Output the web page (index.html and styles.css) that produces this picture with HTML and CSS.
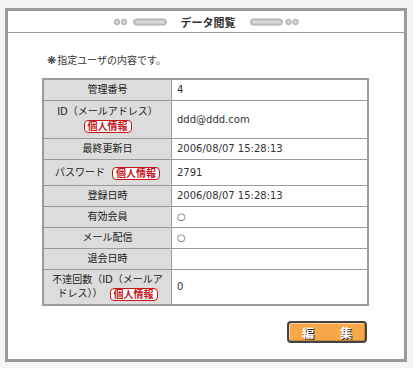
FILE: index.html
```html
<!DOCTYPE html>
<html>
	<head>
		<meta charset="UTF-8">
		<title>データ閲覧</title>
		<link rel="stylesheet" href="styles.css">
	</head>

	<body>
		<div class="panel">
			<div class="panel-head">
				<svg class="deco" width="54" height="8" viewBox="0 0 54 8">
					<circle cx="3" cy="4" r="2.8" fill="#c4c4c4" stroke="#a8a8a8" stroke-width="0.8"/>
					<circle cx="3" cy="4" r="1.2" fill="#dedede"/>
					<circle cx="10" cy="4" r="2.8" fill="#c4c4c4" stroke="#a8a8a8" stroke-width="0.8"/>
					<circle cx="10" cy="4" r="1.2" fill="#dedede"/>
					<rect x="19.5" y="1" width="33" height="6" rx="3" fill="#c8c8c8" stroke="#a4a4a4" stroke-width="0.9"/>
					<line x1="22" y1="4" x2="50" y2="4" stroke="#f0f0f0" stroke-width="1"/>
				</svg>
				<span class="head-title">データ閲覧</span>
				<svg class="deco" width="49" height="8" viewBox="0 0 49 8">
					<rect x="0.5" y="1" width="32" height="6" rx="3" fill="#c8c8c8" stroke="#a4a4a4" stroke-width="0.9"/>
					<line x1="3" y1="4" x2="30" y2="4" stroke="#f0f0f0" stroke-width="1"/>
					<circle cx="38.5" cy="4" r="2.8" fill="#c4c4c4" stroke="#a8a8a8" stroke-width="0.8"/>
					<circle cx="38.5" cy="4" r="1.2" fill="#dedede"/>
					<circle cx="45.5" cy="4" r="2.8" fill="#c4c4c4" stroke="#a8a8a8" stroke-width="0.8"/>
					<circle cx="45.5" cy="4" r="1.2" fill="#dedede"/>
				</svg>
			</div>

			<p class="message"><span class="mark">❋</span>指定ユーザの内容です。</p>

			<table class="detail">
				<tr>
					<th>管理番号</th>
					<td>4</td>
				</tr>
				<tr class="tall">
					<th>ID（メールアドレス）<br><span class="badge">個人情報</span></th>
					<td>ddd@ddd.com</td>
				</tr>
				<tr>
					<th>最終更新日</th>
					<td>2006/08/07 15:28:13</td>
				</tr>
				<tr class="mid">
					<th>パスワード<span class="badge gap">個人情報</span></th>
					<td>2791</td>
				</tr>
				<tr>
					<th>登録日時</th>
					<td>2006/08/07 15:28:13</td>
				</tr>
				<tr>
					<th>有効会員</th>
					<td><span class="flag">○</span></td>
				</tr>
				<tr>
					<th>メール配信</th>
					<td><span class="flag">○</span></td>
				</tr>
				<tr>
					<th>退会日時</th>
					<td></td>
				</tr>
				<tr class="wrap">
					<th>
						<span class="line">不達回数（ID（メールア</span>
						<span class="line">ドレス））<span class="badge gap">個人情報</span></span>
					</th>
					<td>0</td>
				</tr>
			</table>

			<div class="actions">
				<button class="edit-btn" type="button"><span>編</span><span>集</span></button>
			</div>
		</div>
	</body>
</html>
```

FILE: styles.css
```css
html, body, p, table, th, td {
	margin: 0;
	padding: 0;
}
body {
	background: #f7f4f7;
	font-family: "DejaVu Sans", "Noto Sans CJK JP", sans-serif;
	font-size: 10px;
	color: #333;
}
.panel {
	margin: 8px 0 0 5px;
	width: 396px;
	height: 348px;
	border: 3px solid #9a9a9a;
	background: #fff;
}
.panel-head {
	height: 21px;
	border-bottom: 1px solid #9a9a9a;
	display: flex;
	align-items: center;
	justify-content: center;
}
.deco {
	display: block;
}
.head-title {
	margin: 0 14px 0 13px;
	font-size: 11px;
	font-weight: bold;
	color: #333;
}
.message {
	margin-top: 22px;
	padding-left: 39px;
	line-height: 12px;
}
.mark {
	margin-right: 1px;
	font-size: 11px;
	font-weight: bold;
	color: #333;
}
table.detail {
	margin-top: 11px;
	margin-left: 34px;
	width: 327px;
	border-collapse: collapse;
	border: 2px solid #9a9a9a;
}
table.detail th,
table.detail td {
	border: 1px solid #9a9a9a;
	padding: 4px 5px;
	line-height: 12px;
	vertical-align: middle;
}
table.detail th {
	width: 117px;
	background: #dcdcdc;
	font-weight: normal;
	text-align: center;
	color: #222;
}
table.detail tr.tall th,
table.detail tr.mid th {
	padding-top: 5px;
	padding-bottom: 5px;
}
table.detail tr.wrap th {
	padding-top: 3px;
	padding-bottom: 3px;
	line-height: 14px;
}
.line {
	display: block;
	white-space: nowrap;
}
.badge {
	display: inline-block;
	margin-top: 2px;
	padding: 0 3px;
	line-height: 11px;
	border: 1px solid #c8161d;
	border-radius: 4px;
	background: #fff;
	color: #c8161d;
	font-weight: bold;
	vertical-align: middle;
}
.wrap .badge {
	margin-top: 0;
}
.badge.gap {
	margin-left: 7px;
}
.flag {
	color: #555;
}
.actions {
	margin-top: 15px;
	margin-right: 37px;
	display: flex;
	justify-content: flex-end;
}
.edit-btn {
	width: 80px;
	height: 22px;
	padding: 0;
	border: 2px solid #444;
	border-radius: 4px;
	background: #f8a848;
	box-shadow: inset 1px 1px 0 #fcd09a, inset -1px -1px 0 #c98634;
	display: flex;
	align-items: center;
	justify-content: center;
	gap: 26px;
	font-family: "Noto Sans CJK JP", sans-serif;
	font-size: 12px;
	font-weight: bold;
	color: #fff;
	text-shadow: 1px 1px 0 #222;
}
```
